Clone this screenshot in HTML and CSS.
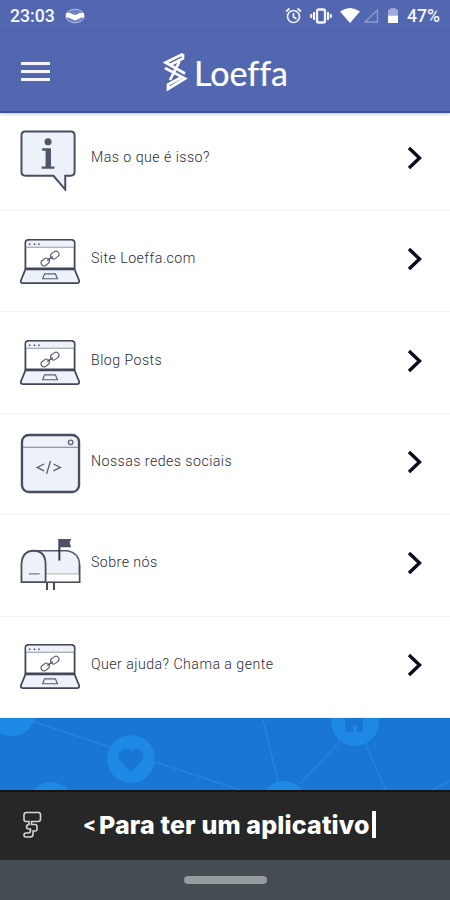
FILE: index.html
```html
<!DOCTYPE html>
<html lang="pt-BR">
<head>
  <meta charset="UTF-8">
  <title>Loeffa</title>
  <link rel="stylesheet" href="styles.css">
</head>
<body>

<svg class="sprite">
  <symbol id="laptop" viewBox="0 0 62 62">
    <path d="M5.500 38V12q0-3 3-3h44q3 0 3 3v26z" fill="#fff" stroke="#42465b" stroke-width="1.800"/>
    <path d="M6.500 16v-4q0-2 2-2h44q2 0 2 2v4z" fill="#edf1f8"/>
    <path d="M6 16.500h49" stroke="#8d92a2"/>
    <path d="M9 13.500h1.500M14 13.500h1.500M18.500 13.500h1.500" stroke="#42465b" stroke-width="1.500"/>
    <path d="M5.500 39h50l4.500 11q.8 3-2.200 3H3.200Q.2 53 1 50z" fill="#edf1f8" stroke="#42465b" stroke-width="1.800"/>
    <path d="M25 43.500h11l2 5H23z" fill="#edf1f8" stroke="#5a5e70" stroke-width="1.200"/>
    <g fill="none" stroke="#5a5e70" stroke-width="1.100" transform="rotate(-36 30.500 28)">
      <rect x="20" y="25" width="9" height="6" rx="3"/>
      <rect x="32" y="25" width="9" height="6" rx="3"/>
      <path d="M27 28h7" stroke-width="1.600"/>
    </g>
  </symbol>
  <symbol id="seta" viewBox="0 0 16 26">
    <path d="M2 3l10.500 10L2 23" fill="none" stroke="#0b0b20" stroke-width="3.400"/>
  </symbol>
</svg>

<div class="status">
  <span class="hora">23:03</span>
  <svg width="20" height="16" viewBox="0 0 20 16">
    <ellipse cx="10" cy="8" rx="9.200" ry="6.800" fill="#7482c2" stroke="#b3bce2"/>
    <path d="M1 5q4-1 6 1l3 1 3-1q2-2 6-1v4.500q-3-.5-4.500 1L10 12.500l-4.500-2Q4 9 1 9.500z" fill="#fff"/>
  </svg>
  <div class="status-icones">
    <svg width="17" height="18" viewBox="0 0 17 18" fill="none" stroke="#f3f4ff" stroke-width="1.700">
      <circle cx="8.500" cy="9.500" r="6"/>
      <path d="M8.500 6v4l3 1.700M1 4.500L4.500 1.500M16 4.500L12.500 1.500"/>
    </svg>
    <svg width="22" height="18" viewBox="0 0 22 18" fill="none" stroke="#f3f4ff" stroke-width="2">
      <rect x="7" y="2.500" width="8" height="13" rx="1.500" stroke-width="2.300"/>
      <path d="M4 5v8M18 5v8M1.200 7v4M20.800 7v4"/>
    </svg>
    <svg width="20" height="18" viewBox="0 0 20 18">
      <path d="M0 4.500q10-7 20 0L10 16z" fill="#fff"/>
    </svg>
    <svg width="16" height="18" viewBox="0 0 16 18">
      <path d="M2 15L14.500 3v12z" fill="none" stroke="#8f9ad1" stroke-width="1.300"/>
    </svg>
    <svg width="12" height="18" viewBox="0 0 12 18">
      <path d="M1 8.500V2.500h2.500V1h5v1.500H11v6z" fill="#a0a9d8"/>
      <path d="M1 8.500h10v7.500H1z" fill="#fff"/>
    </svg>
    <span>47%</span>
  </div>
</div>

<header class="topo">
  <div class="menu">
    <span></span>
    <span></span>
    <span></span>
  </div>
  <div class="logo">
    <svg width="26" height="40" viewBox="0 0 26 40" fill="none" stroke="#fff" stroke-width="2.700">
      <path d="M21 2L3.500 10.500 23 21.500M21 2v4.500L8 13M3 16l20 10.500L6 37v-4.500l13-7M17.500 9.500L8 28"/>
    </svg>
    <span>Loeffa</span>
  </div>
</header>

<main class="lista">
  <div class="item">
    <svg class="icone" viewBox="0 0 62 62">
      <path d="M5.500 1.500h46q4 0 4 4v37q0 4-4 4H46v14L34 46.500H5.500q-4 0-4-4v-37q0-4 4-4z" fill="#edf1f8" stroke="#484d60" stroke-width="2"/>
      <circle cx="28.500" cy="12" r="3.600" fill="#505568"/>
      <path d="M22.500 18.500h9v18.500h3.500v2.500H22V37h4V21h-3.500z" fill="#505568"/>
    </svg>
    <span class="texto">Mas o que é isso?</span>
    <svg class="seta"><use href="#seta"/></svg>
  </div>
  <div class="item">
    <svg class="icone"><use href="#laptop"/></svg>
    <span class="texto">Site Loeffa.com</span>
    <svg class="seta"><use href="#seta"/></svg>
  </div>
  <div class="item">
    <svg class="icone"><use href="#laptop"/></svg>
    <span class="texto">Blog Posts</span>
    <svg class="seta"><use href="#seta"/></svg>
  </div>
  <div class="item">
    <svg class="icone" viewBox="0 0 62 62">
      <rect x="2" y="2" width="58" height="58" rx="7" fill="#edf1f8" stroke="#484d60" stroke-width="2.400"/>
      <path d="M3 14.500h56" stroke="#777c8c"/>
      <circle cx="51.500" cy="9.500" r="2.300" fill="none" stroke="#5c6173" stroke-width="1.300"/>
      <path d="M24.500 31.500l-7 3.500 7 3.500M34 31.500l7 3.500-7 3.500M31 28.500l-4 13" fill="none" stroke="#5c6173" stroke-width="1.400"/>
    </svg>
    <span class="texto">Nossas redes sociais</span>
    <svg class="seta"><use href="#seta"/></svg>
  </div>
  <div class="item">
    <svg class="icone" viewBox="0 0 62 62">
      <g transform="translate(0 2)">
        <path d="M27.500 46v8M34.500 46v8" stroke="#42465b" stroke-width="2"/>
        <path d="M14 14h34q12 2 12.500 14v18h-47z" fill="#edf1f8" stroke="#555a6c" stroke-width="1.600"/>
        <path d="M27 37.500h33v8H27z" fill="#fff"/>
        <path d="M27 37.500h33" stroke="#aaaebb"/>
        <path d="M1.500 46V27q1-13 12.500-13t12 13v19z" fill="#edf1f8" stroke="#484d60" stroke-width="1.800"/>
        <path d="M27 46h33.500V28" fill="none" stroke="#484d60" stroke-width="1.500"/>
        <path d="M9 37.500h11" stroke="#6d7283" stroke-width="1.200"/>
        <path d="M40 24V2" stroke="#33374c" stroke-width="2"/>
        <path d="M40 2h12l-1.500 4 1.500 4.500H40z" fill="#4d5268"/>
      </g>
    </svg>
    <span class="texto">Sobre nós</span>
    <svg class="seta"><use href="#seta"/></svg>
  </div>
  <div class="item">
    <svg class="icone"><use href="#laptop"/></svg>
    <span class="texto">Quer ajuda? Chama a gente</span>
    <svg class="seta"><use href="#seta"/></svg>
  </div>
</main>

<svg class="rede" viewBox="0 0 450 72">
  <g stroke="#2683e0" stroke-width="1.500" fill="none">
    <path d="M32 3L240 72M263 2l15 62M340 23l-40 43M364 23l22 49M434 71l16-8"/>
  </g>
  <g fill="#1e88e5">
    <circle cx="12" cy="-6" r="24"/>
    <circle cx="131" cy="41" r="24"/>
    <circle cx="51" cy="87" r="23"/>
    <circle cx="284" cy="86" r="23"/>
    <circle cx="355" cy="4" r="24"/>
  </g>
  <path d="M131 54l-10-10.500q-5-6 0-11 5.500-4 10 1 4.500-5 10-1 5 5 0 11z" fill="#1976d2"/>
  <path d="M345 0h18v14h-6V7h-4v7h-8z" fill="#1976d2"/>
</svg>

<div class="anuncio">
  <svg width="20" height="28" viewBox="0 0 20 28" fill="none" stroke="#d5d5d5" stroke-width="1.600">
    <path d="M4.500 1.500h12Q18.500 1.500 18.500 4v4q0 2.500-2.500 2.500H9.500v3H13q2 0 2 2V18q0 2-2 2h-2v3.500q0 2.500-3 2.500H4q-2 0-2-2t2-2h2q2.500 0 2.500-2.500V18H7q-2.500 0-2.500-2.200t2.500-2.300v-3H4Q2 10.500 2 8.500V4q0-2.500 2.500-2.500z"/>
  </svg>
  <span class="menor">&lt;</span>
  <span class="frase">Para ter um aplicativo</span>
  <span class="cursor"></span>
</div>

<div class="navegacao">
  <div class="barra"></div>
</div>

</body>
</html>
```
FILE: styles.css
```css
body {
  margin: 0;
  width: 450px;
  height: 900px;
  overflow: hidden;
  font-family: Roboto, sans-serif;
  background: #fff;
}
svg {
  display: block;
  flex-shrink: 0;
}
.sprite {
  display: none;
}
.status {
  display: flex;
  align-items: center;
  height: 32px;
  padding: 0 10px;
  background: #5367b1;
  color: #f6f7ff;
  font-size: 17.6px;
  font-weight: 500;
}
.hora {
  width: 55px;
}
.status-icones {
  display: flex;
  align-items: center;
  margin-left: auto;
}
.status-icones svg {
  margin-right: 8px;
}
.status-icones svg:nth-child(3) {
  margin-right: 3px;
}
.topo {
  display: flex;
  align-items: center;
  box-sizing: border-box;
  height: 81px;
  padding: 0 21px;
  background: #5367b1;
  border-bottom: 2px solid #3d50a0;
  box-shadow: 0 1px 3px rgba(0,0,0,0.25);
}
.menu {
  display: flex;
  flex-direction: column;
  gap: 5px;
  width: 29px;
}
.menu span {
  height: 3px;
  background: #f5f5ff;
}
.logo {
  display: flex;
  align-items: center;
  margin-left: 112px;
  color: #fff;
  font-family: Lato, sans-serif;
  font-size: 34px;
  font-variant-ligatures: none;
  -webkit-text-stroke: 0.2px #fff;
}
.logo span {
  margin-left: 6px;
  padding-top: 2px;
}
.lista {
  display: grid;
  grid-template-rows: 98px repeat(5, 1fr);
  height: 605px;
}
.item {
  display: flex;
  align-items: center;
  box-sizing: border-box;
  padding: 0 27px 6px 20px;
  border-bottom: 1px solid #f3f3f3;
}
.item:first-child {
  padding-bottom: 9px;
}
.icone {
  width: 61px;
  height: 61px;
  margin-top: 6px;
}
.texto {
  margin-left: 10px;
  color: #2c2c36;
  font-size: 14.2px;
  font-weight: 300;
  line-height: 20px;
  letter-spacing: 0.45px;
}
.seta {
  width: 16px;
  height: 26px;
  margin-top: 2px;
  margin-left: auto;
}
.rede {
  width: 450px;
  height: 72px;
  background: #1976d2;
}
.anuncio {
  display: flex;
  align-items: center;
  box-sizing: border-box;
  height: 70px;
  padding: 0 0 3px 22px;
  background: #272727;
  border-top: 2px solid #141414;
  color: #fff;
  font-family: Inter, sans-serif;
  font-size: 25px;
  font-weight: 800;
}
.menor {
  margin-left: 41px;
  width: 16px;
  font-size: 19px;
}
.frase {
  letter-spacing: 0.15px;
  white-space: nowrap;
}
.cursor {
  width: 4px;
  height: 27px;
  margin-left: 2px;
  background: #fff;
}
.navegacao {
  display: flex;
  justify-content: center;
  align-items: center;
  height: 40px;
  background: #454d52;
}
.barra {
  width: 83px;
  height: 8px;
  border-radius: 4px;
  background: #969b9e;
}
```
